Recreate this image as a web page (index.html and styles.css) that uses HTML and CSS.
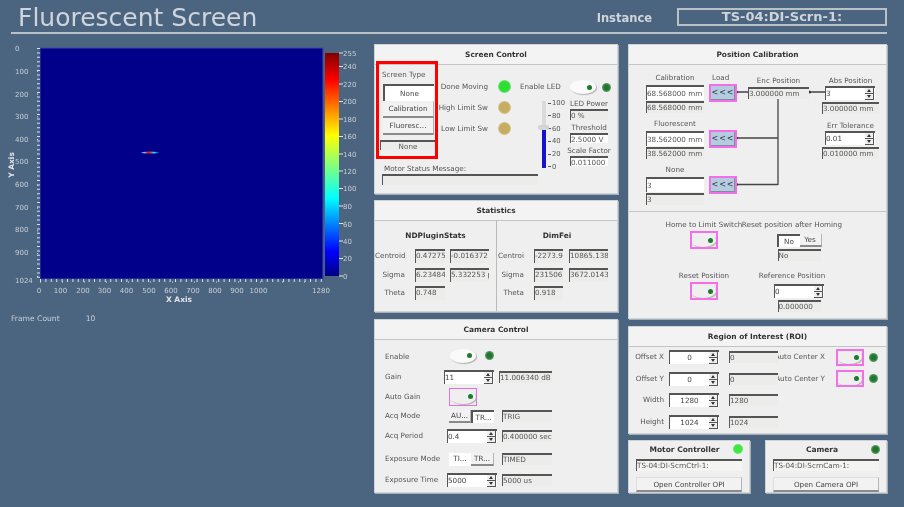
FILE: index.html
```html
<!DOCTYPE html>
<html lang="en">
<head>
    <meta charset="UTF-8">
    <meta name="viewport" content="width=device-width, initial-scale=1.0">
    <title>Fluorescent Screen</title>
    <link rel="stylesheet" href="styles.css">
</head>
<body>
    <div class="page">
        <header class="top">
            <h1>Fluorescent Screen</h1>
            <span class="instance-label">Instance</span>
            <span class="instance-value">TS-04:DI-Scrn-1:</span>
        </header>

        <main class="content">
            <section class="plot-col">
                <svg class="plot" viewBox="0 34 375 270" width="375" height="270">
                    <defs>
                        <linearGradient id="jet" x1="0" y1="1" x2="0" y2="0">
                            <stop offset="0" stop-color="#00007f"/>
                            <stop offset="0.11" stop-color="#0000ff"/>
                            <stop offset="0.35" stop-color="#00ffff"/>
                            <stop offset="0.63" stop-color="#ffff00"/>
                            <stop offset="0.88" stop-color="#ff0000"/>
                            <stop offset="1" stop-color="#7f0000"/>
                        </linearGradient>
                        <linearGradient id="spot" x1="0" y1="0" x2="1" y2="0">
                            <stop offset="0" stop-color="#00008b"/>
                            <stop offset="0.2" stop-color="#7fd0ff"/>
                            <stop offset="0.4" stop-color="#d01818"/>
                            <stop offset="0.55" stop-color="#e04040"/>
                            <stop offset="0.7" stop-color="#20f0ff"/>
                            <stop offset="1" stop-color="#00008b"/>
                        </linearGradient>
                    </defs>
                    <rect class="plot-image" x="40" y="48" width="283" height="231"/>
                    <ellipse cx="150" cy="152.6" rx="10" ry="1" fill="url(#spot)"/>

                    <line class="tick-minor" x1="38.5" y1="48" x2="38.5" y2="280"/>
                    <line class="tick-major" x1="37.5" y1="48" x2="37.5" y2="280"/>
                    <line class="tick-minor tick-x" x1="40" y1="280.5" x2="324" y2="280.5"/>
                    <line class="tick-major tick-x" x1="40" y1="282" x2="324" y2="282"/>

                    <g class="axis-text">
                        <text x="15" y="51">0</text>
                        <text x="15" y="74">100</text>
                        <text x="15" y="97">200</text>
                        <text x="15" y="119">300</text>
                        <text x="15" y="142">400</text>
                        <text x="15" y="164">500</text>
                        <text x="15" y="187">600</text>
                        <text x="15" y="210">700</text>
                        <text x="15" y="232">800</text>
                        <text x="15" y="255">900</text>
                        <text x="15" y="283">1024</text>
                    </g>
                    <g class="axis-text axis-text-x">
                        <text x="39" y="293">0</text>
                        <text x="60.5" y="293">100</text>
                        <text x="83" y="293">200</text>
                        <text x="104.5" y="293">300</text>
                        <text x="126.5" y="293">400</text>
                        <text x="149" y="293">500</text>
                        <text x="171" y="293">600</text>
                        <text x="193" y="293">700</text>
                        <text x="215" y="293">800</text>
                        <text x="237" y="293">900</text>
                        <text x="258.5" y="293">1000</text>
                        <text x="321" y="293">1280</text>
                    </g>
                    <text class="axis-title" x="179" y="302" text-anchor="middle">X Axis</text>
                    <text class="axis-title" transform="translate(13.5 165) rotate(-90)" text-anchor="middle">Y Axis</text>

                    <rect x="325" y="53" width="14" height="223" fill="url(#jet)"/>
                    <g class="bar-ticks">
                        <line x1="339" x2="343" y1="53" y2="53"/>
                        <line x1="339" x2="343" y1="66.5" y2="66.5"/>
                        <line x1="339" x2="343" y1="84" y2="84"/>
                        <line x1="339" x2="343" y1="101.5" y2="101.5"/>
                        <line x1="339" x2="343" y1="119" y2="119"/>
                        <line x1="339" x2="343" y1="136.5" y2="136.5"/>
                        <line x1="339" x2="343" y1="154" y2="154"/>
                        <line x1="339" x2="343" y1="171" y2="171"/>
                        <line x1="339" x2="343" y1="188.5" y2="188.5"/>
                        <line x1="339" x2="343" y1="206" y2="206"/>
                        <line x1="339" x2="343" y1="223.5" y2="223.5"/>
                        <line x1="339" x2="343" y1="241" y2="241"/>
                        <line x1="339" x2="343" y1="258.5" y2="258.5"/>
                        <line x1="339" x2="343" y1="276" y2="276"/>
                    </g>
                    <g class="axis-text">
                        <text x="343" y="55.5">255</text>
                        <text x="343" y="69">240</text>
                        <text x="343" y="87">220</text>
                        <text x="343" y="104">200</text>
                        <text x="343" y="121.5">180</text>
                        <text x="343" y="139">160</text>
                        <text x="343" y="156.5">140</text>
                        <text x="343" y="174">120</text>
                        <text x="343" y="191">100</text>
                        <text x="343" y="208.5">80</text>
                        <text x="343" y="226.5">60</text>
                        <text x="343" y="243.5">40</text>
                        <text x="343" y="261">20</text>
                        <text x="343" y="279">0</text>
                    </g>
                </svg>
                <div class="frame-count">
                    <span>Frame Count</span>
                    <span>10</span>
                </div>
            </section>

            <section class="panel-col">
                <div class="panel panel-screen">
                    <h2 class="panel-title">Screen Control</h2>
                    <div class="screen-body">
                        <div class="screen-type">
                            <span class="lbl">Screen Type</span>
                            <div class="type-buttons">
                                <span class="btn btn-on">None</span>
                                <span class="btn">Calibration</span>
                                <span class="btn">Fluoresc...</span>
                            </div>
                            <span class="box box-center">None</span>
                        </div>
                        <div class="status">
                            <div class="status-row"><span class="lbl">Done Moving</span><i class="led led-green"></i></div>
                            <div class="status-row"><span class="lbl">High Limit Sw</span><i class="led led-tan"></i></div>
                            <div class="status-row"><span class="lbl">Low Limit Sw</span><i class="led led-tan"></i></div>
                        </div>
                        <div class="enable-led">
                            <span class="lbl">Enable LED</span>
                            <span class="toggle"></span>
                            <i class="led led-small"></i>
                        </div>
                        <div class="slider">
                            <div class="slider-track"><span class="slider-handle"></span></div>
                            <div class="slider-scale">
                                <span>100</span><span>80</span><span>60</span><span>40</span><span>20</span><span>0</span>
                            </div>
                        </div>
                        <div class="led-fields">
                            <span class="lbl">LED Power</span>
                            <span class="box box-power">0 %</span>
                            <span class="lbl">Threshold</span>
                            <span class="box box-white">2.5000 V</span>
                            <span class="lbl">Scale Factor</span>
                            <span class="box box-white">0.011000</span>
                        </div>
                        <div class="motor-message">
                            <span class="lbl">Motor Status Message:</span>
                            <span class="box"></span>
                        </div>
                    </div>
                    <div class="highlight"></div>
                </div>

                <div class="panel panel-stats">
                    <h2 class="panel-title">Statistics</h2>
                    <div class="stats-body">
                        <div class="stats-side">
                            <h3>NDPluginStats</h3>
                            <div class="stats-grid">
                                <span class="lbl">Centroid</span>
                                <span class="box">0.472753</span>
                                <span class="box">-0.016372 px</span>
                                <span class="lbl">Sigma</span>
                                <span class="box">6.234842</span>
                                <span class="box">5.332253 px</span>
                                <span class="lbl">Theta</span>
                                <span class="box">0.748</span>
                            </div>
                        </div>
                        <div class="stats-side stats-side-right">
                            <h3>DimFei</h3>
                            <div class="stats-grid">
                                <span class="lbl">Centroid</span>
                                <span class="box">-2273.946</span>
                                <span class="box">10865.1382</span>
                                <span class="lbl">Sigma</span>
                                <span class="box">2315063</span>
                                <span class="box">3672.0143</span>
                                <span class="lbl">Theta</span>
                                <span class="box">0.918</span>
                            </div>
                        </div>
                    </div>
                </div>

                <div class="panel panel-camera">
                    <h2 class="panel-title">Camera Control</h2>
                    <div class="camera-body">
                        <span class="lbl">Enable</span>
                        <div class="camera-enable"><span class="toggle"></span><i class="led led-small"></i></div>
                        <span></span>

                        <span class="lbl">Gain</span>
                        <div class="spin spin-gain"><span class="spin-value">11</span><span class="spin-arrows"><i></i><i></i></span></div>
                        <span class="box box-gain">11.006340 dB</span>

                        <span class="lbl">Auto Gain</span>
                        <div class="marked"><span class="toggle"></span></div>
                        <span></span>

                        <span class="lbl">Acq Mode</span>
                        <div class="pair"><span class="btn">AU...</span><span class="btn btn-on">TR...</span></div>
                        <span class="box">TRIG</span>

                        <span class="lbl">Acq Period</span>
                        <div class="spin"><span class="spin-value">0.4</span><span class="spin-arrows"><i></i><i></i></span></div>
                        <span class="box">0.400000 sec:</span>

                        <span class="lbl">Exposure Mode</span>
                        <div class="pair"><span class="btn btn-white">TI...</span><span class="btn">TR...</span></div>
                        <span class="box">TIMED</span>

                        <span class="lbl">Exposure Time</span>
                        <div class="spin"><span class="spin-value">5000</span><span class="spin-arrows"><i></i><i></i></span></div>
                        <span class="box">5000 us</span>
                    </div>
                </div>
            </section>

            <section class="panel-col">
                <div class="panel panel-calib">
                    <h2 class="panel-title">Position Calibration</h2>
                    <div class="calib-upper">
                        <svg class="calib-lines" viewBox="629 65 257 147" width="257" height="147">
                            <path d="M736 92H748M809 92H825M778 98V185M736 138H778M736 184.500H778"/>
                            <circle cx="736.500" cy="92" r="1.500"/>
                            <circle cx="809.500" cy="92" r="1.500"/>
                            <circle cx="736.500" cy="138" r="1.500"/>
                            <circle cx="736.500" cy="184.500" r="1.500"/>
                        </svg>
                        <div class="calib-col calib-values">
                            <div class="calib-group">
                                <span class="lbl">Calibration</span>
                                <span class="box box-white box-tall">68.568000 mm</span>
                                <span class="box">68.568000 mm</span>
                            </div>
                            <div class="calib-group">
                                <span class="lbl">Fluorescent</span>
                                <span class="box box-white box-tall">38.562000 mm</span>
                                <span class="box">38.562000 mm</span>
                            </div>
                            <div class="calib-group">
                                <span class="lbl">None</span>
                                <span class="box box-white box-tall">3</span>
                                <span class="box">3</span>
                            </div>
                        </div>
                        <div class="calib-col calib-load">
                            <span class="lbl">Load</span>
                            <span class="load-btn">&lt;&lt;&lt;</span>
                            <span class="load-btn">&lt;&lt;&lt;</span>
                            <span class="load-btn">&lt;&lt;&lt;</span>
                        </div>
                        <div class="calib-col calib-enc">
                            <span class="lbl">Enc Position</span>
                            <span class="box">3.000000 mm</span>
                        </div>
                        <div class="calib-col calib-abs">
                            <span class="lbl">Abs Position</span>
                            <div class="spin"><span class="spin-value">3</span><span class="spin-arrows"><i></i><i></i></span></div>
                            <span class="box">3.000000 mm</span>
                            <span class="lbl lbl-err">Err Tolerance</span>
                            <div class="spin"><span class="spin-value">0.01</span><span class="spin-arrows"><i></i><i></i></span></div>
                            <span class="box">0.010000 mm</span>
                        </div>
                    </div>
                    <div class="calib-lower">
                        <div class="home-col">
                            <div class="home-group">
                                <span class="lbl">Home to Limit Switch</span>
                                <div class="marked"><span class="toggle"></span></div>
                            </div>
                            <div class="home-group">
                                <span class="lbl">Reset Position</span>
                                <div class="marked"><span class="toggle"></span></div>
                            </div>
                        </div>
                        <div class="home-col home-col-right">
                            <div class="home-group">
                                <span class="lbl">Reset position after Homing</span>
                                <div class="pair pair-yes"><span class="btn btn-on">No</span><span class="btn">Yes</span></div>
                                <span class="box">No</span>
                            </div>
                            <div class="home-group">
                                <span class="lbl">Reference Position</span>
                                <div class="spin"><span class="spin-value">0</span><span class="spin-arrows"><i></i><i></i></span></div>
                                <span class="box">0.000000</span>
                            </div>
                        </div>
                    </div>
                </div>

                <div class="panel panel-roi">
                    <h2 class="panel-title">Region of Interest (ROI)</h2>
                    <div class="roi-body">
                        <span class="lbl">Offset X</span>
                        <div class="spin spin-center"><span class="spin-value">0</span><span class="spin-arrows"><i></i><i></i></span></div>
                        <span class="box">0</span>
                        <span class="lbl lbl-clip"><span>Auto Center X</span></span>
                        <div class="marked"><span class="toggle"></span></div>
                        <i class="led led-small"></i>

                        <span class="lbl">Offset Y</span>
                        <div class="spin spin-center"><span class="spin-value">0</span><span class="spin-arrows"><i></i><i></i></span></div>
                        <span class="box">0</span>
                        <span class="lbl lbl-clip"><span>Auto Center Y</span></span>
                        <div class="marked"><span class="toggle"></span></div>
                        <i class="led led-small"></i>

                        <span class="lbl">Width</span>
                        <div class="spin spin-center"><span class="spin-value">1280</span><span class="spin-arrows"><i></i><i></i></span></div>
                        <span class="box">1280</span>
                        <span></span><span></span><span></span>

                        <span class="lbl">Height</span>
                        <div class="spin spin-center"><span class="spin-value">1024</span><span class="spin-arrows"><i></i><i></i></span></div>
                        <span class="box">1024</span>
                    </div>
                </div>

                <div class="links">
                    <div class="panel link-panel">
                        <div class="link-head"><h2>Motor Controller</h2><i class="led led-lime"></i></div>
                        <span class="box">TS-04:DI-ScrnCtrl-1:</span>
                        <span class="btn link-btn">Open Controller OPI</span>
                    </div>
                    <div class="panel link-panel">
                        <div class="link-head"><h2>Camera</h2><i class="led led-small"></i></div>
                        <span class="box">TS-04:DI-ScrnCam-1:</span>
                        <span class="btn link-btn">Open Camera OPI</span>
                    </div>
                </div>
            </section>
        </main>
    </div>
</body>
</html>
```

FILE: styles.css
```css
* {
    box-sizing: border-box;
    padding: 0;
    margin: 0;
}

:root {
    --bg-color: #4b6580;
    --panel: #efefef;
    --text: #555;
    --head: #cfd5da;
    --line: #555;
    --magenta: #f46ee8;
}

body {
    background-color: var(--bg-color);
    font-family: "DejaVu Sans", sans-serif;
    font-size: 7.200px;
    color: var(--text);
}

.page {
    width: 904px;
    height: 507px;
    overflow: hidden;
    filter: blur(.4px);
}

.top {
    height: 34px;
    margin: 0 17px 0 11px;
    padding: 0 0 0 7px;
    border-bottom: 2px solid #b9c0c6;
    display: flex;
    align-items: center;
    color: var(--head);
}

h1 {
    font-size: 25px;
    font-weight: normal;
    line-height: 1;
    flex: 1;
    margin-top: 2px;
}

.instance-label {
    font-size: 11.500px;
    font-weight: bold;
    margin-top: 4px;
}

.instance-value {
    width: 210px;
    height: 18px;
    margin: 2px 0 0 25px;
    border: 2px solid #b9c0c6;
    font-size: 13px;
    font-weight: bold;
    line-height: 14px;
    text-align: center;
}

.content {
    display: grid;
    grid-template-columns: 363px 244px 259px;
    column-gap: 10px;
    padding-top: 10px;
    padding-left: 1px;
}

.plot-col {
    margin: -10px 0 0 -1px;
}

.plot {
    display: block;
}

.plot-image {
    fill: #00008b;
    stroke: #3a4fa0;
    stroke-width: 1;
}

.tick-minor, .tick-major {
    stroke: #dde1e5;
    stroke-width: 1;
    stroke-dasharray: 1 3.400;
}

.tick-minor {
    stroke-width: 3;
}

.tick-major {
    stroke-dasharray: 1 21.800;
}

.tick-x {
    stroke-dasharray: 1 4.400;
}

.tick-major.tick-x {
    stroke-dasharray: 1 21;
}

.axis-text {
    font-size: 7px;
    fill: #c9cfd5;
}

.axis-text-x text {
    text-anchor: middle;
}

.axis-title {
    font-size: 7.500px;
    font-weight: bold;
    fill: #dfe3e7;
}

.bar-ticks line {
    stroke: #e2e5e8;
    stroke-width: 1;
}

.frame-count {
    display: flex;
    gap: 26px;
    padding: 10px 0 0 11px;
    font-size: 7.600px;
    color: #c9cfd5;
}

.panel-col {
    display: flex;
    flex-direction: column;
    gap: 6px;
}

.panel {
    position: relative;
    background-color: var(--panel);
    border: 1px solid #d0d3d6;
    box-shadow: 1px 1px 0 #a8b0b8;
}

.panel-title {
    height: 20px;
    border-bottom: 1px solid #c4c4c4;
    background-color: #f3f3f3;
    font-size: 7.400px;
    line-height: 20px;
    text-align: center;
    color: #333;
}

.panel-screen {
    height: 150px;
}

.panel-stats {
    height: 112px;
}

.panel-camera {
    height: 174px;
    margin-top: 1px;
}

.panel-calib {
    height: 275px;
}

.panel-roi {
    height: 108px;
    margin-top: 1px;
}

.lbl {
    white-space: nowrap;
    line-height: 10px;
}

.box {
    display: block;
    height: 12px;
    overflow: hidden;
    white-space: nowrap;
    border-top: 2px solid var(--line);
    border-left: 1px solid var(--line);
    background-color: #ececea;
    line-height: 10px;
    color: #555;
}

.box-white {
    background-color: #fff;
}

.box-tall {
    height: 15px;
    line-height: 13px;
}

.box-center {
    text-align: center;
}

.btn {
    display: block;
    overflow: hidden;
    white-space: nowrap;
    text-align: center;
    background-color: #f2f2f2;
    border-right: 1px solid #b4b4b4;
    border-bottom: 2px solid #8a8a8a;
    color: #444;
}

.btn-on {
    background-color: #fff;
    border: 0;
    border-top: 2px solid var(--line);
    border-left: 2px solid var(--line);
}

.btn-white {
    background-color: #fff;
    border: 0;
}

.led {
    display: block;
    flex: none;
    border-radius: 50%;
}

.led-green {
    width: 13px;
    height: 13px;
    background: radial-gradient(circle, #2be030 0 52%, #a6dca8 80%);
}

.led-tan {
    width: 13px;
    height: 13px;
    background: radial-gradient(circle, #c6ad62 0 52%, #d9d1a8 80%);
}

.led-small {
    width: 9px;
    height: 9px;
    background: radial-gradient(circle, #1c7a2c 0 38%, #8da893 85%);
}

.led-lime {
    width: 10px;
    height: 10px;
    background: radial-gradient(circle, #3fe83f 0 50%, #a8d8a8 85%);
}

.toggle {
    display: flex;
    justify-content: flex-end;
    align-items: center;
    width: 26px;
    height: 14px;
    flex: none;
    padding-right: 4px;
    border-radius: 50%;
    background-color: #fafafa;
    box-shadow: 1px 1px 1px #b0b0b0;
}

.toggle::after {
    content: "";
    width: 5px;
    height: 5px;
    border-radius: 50%;
    background-color: #1c7a2c;
}

.marked {
    display: flex;
    justify-content: flex-end;
    align-items: center;
    width: 28px;
    height: 18px;
    overflow: hidden;
    border: 2px solid var(--magenta);
}

.marked .toggle {
    padding-right: 3px;
    background-color: var(--panel);
}

.spin {
    display: flex;
    width: 50px;
    height: 14px;
    background-color: #fff;
    border-top: 2px solid var(--line);
    border-left: 1px solid var(--line);
}

.spin-value {
    flex: 1;
    line-height: 12px;
    color: #444;
}

.spin-center .spin-value {
    text-align: center;
}

.spin-arrows {
    display: flex;
    flex-direction: column;
    width: 9px;
    margin-right: 1px;
    border-right: 1px solid var(--line);
}

.spin-arrows i {
    flex: 1;
    display: flex;
    justify-content: center;
    align-items: center;
    background-color: var(--panel);
    border-bottom: 1px solid var(--line);
}

.spin-arrows i::before {
    content: "";
    border-left: 2.500px solid transparent;
    border-right: 2.500px solid transparent;
    border-bottom: 3px solid #333;
}

.spin-arrows i + i::before {
    border-bottom: 0;
    border-top: 3px solid #333;
}

.pair {
    display: flex;
    height: 13px;
    line-height: 11px;
}

.pair .btn {
    flex: 1;
}

/* screen control */
.screen-body {
    display: grid;
    grid-template-columns: 5px 58px 72px 28px 31px 1fr;
    grid-template-rows: 15px 21px 63px 27px;
}

.screen-type {
    grid-column: 2;
    grid-row: 1 / 4;
    display: flex;
    flex-direction: column;
    padding-top: 5px;
}

.screen-type .lbl {
    padding-left: 2px;
}

.type-buttons {
    display: flex;
    flex-direction: column;
    width: 51px;
    margin: 4px 0 5px 3px;
}

.type-buttons .btn {
    height: 17px;
    line-height: 15px;
}

.screen-type .box {
    width: 55px;
    height: 10px;
    line-height: 9px;
}

.status {
    grid-column: 3;
    grid-row: 2 / 4;
    display: flex;
    flex-direction: column;
    gap: 8px;
}

.status-row {
    display: flex;
    justify-content: flex-end;
    align-items: center;
    gap: 10px;
    height: 13px;
}

.status-row .led {
    margin-right: -1px;
}

.enable-led {
    grid-column: 4 / 7;
    grid-row: 2;
    display: flex;
    align-items: center;
    height: 14px;
    padding-left: 10px;
}

.enable-led .toggle {
    margin-left: 9px;
}

.enable-led .led {
    margin-left: 6px;
}

.slider {
    grid-column: 5;
    grid-row: 3 / 5;
    display: flex;
    gap: 2px;
    height: 72px;
}

.slider-track {
    position: relative;
    width: 4px;
    height: 67px;
    margin-left: 4px;
    background: linear-gradient(#dadada 0 44%, #1414d0 44%);
}

.slider-handle {
    position: absolute;
    top: 24px;
    left: -4px;
    width: 11px;
    height: 5px;
    border-radius: 2px;
    background-color: #d4d4d4;
}

.slider-scale {
    display: flex;
    flex-direction: column;
    justify-content: space-between;
    height: 72px;
    margin-top: -2px;
    font-size: 6.800px;
    line-height: 8px;
}

.slider-scale span {
    display: flex;
    align-items: center;
    gap: 1px;
}

.slider-scale span::before {
    content: "";
    width: 3px;
    height: 1px;
    background-color: #555;
}

.led-fields {
    grid-column: 6;
    grid-row: 3 / 5;
    display: flex;
    flex-direction: column;
    align-items: center;
    width: 38px;
    margin: -2px 0 0 1px;
}

.led-fields .box {
    width: 38px;
    height: 10px;
    margin-bottom: 3px;
    line-height: 9px;
}

.led-fields .box-power {
    height: 11px;
}

.motor-message {
    grid-column: 2 / 5;
    grid-row: 4;
    display: flex;
    flex-direction: column;
    padding-left: 2px;
}

.motor-message .lbl {
    padding-left: 2px;
}

.motor-message .box {
    height: 11px;
    width: 156px;
}

.highlight {
    position: absolute;
    left: 1px;
    top: 16px;
    width: 62px;
    height: 98px;
    border: 3px solid #f00;
}

/* statistics */
.stats-body {
    display: flex;
    height: 90px;
}

.stats-side {
    flex: none;
    width: 122px;
    border-right: 1px solid #bbb;
    padding-top: 10px;
}

.stats-side h3 {
    font-size: 7.400px;
    line-height: 10px;
    text-align: center;
    color: #333;
}

.stats-side-right {
    width: 120px;
    border-right: 0;
}

.stats-grid {
    display: grid;
    grid-template-columns: 31px 30px 39px;
    grid-auto-rows: 14px;
    column-gap: 5px;
    row-gap: 4.500px;
    align-items: center;
    margin: 8px 0 0 4px;
}

.stats-grid .lbl {
    overflow: hidden;
    text-align: right;
    margin: 0 5px 0 -4px;
}

.stats-grid .box {
    height: 14px;
}

.stats-side-right .stats-grid {
    margin-left: 0;
    grid-template-columns: 31px 29px 39px;
    column-gap: 6px;
}

.stats-side-right .lbl {
    margin: 0 0 0 1px;
    width: 26px;
}

/* camera control */
.camera-body {
    display: grid;
    grid-template-columns: 57px 50px 50px;
    grid-template-rows: 20px 20px 19px 20px 20px 26px 16px;
    column-gap: 5px;
    align-items: center;
    padding: 7px 0 0 10px;
}

.camera-enable {
    display: flex;
    align-items: center;
    gap: 9px;
    margin: -3px 0 0 3px;
}

.camera-body .marked {
    margin-left: 2px;
    border: 1px solid #e070e0;
}

.camera-body .pair {
    margin-left: 2px;
    width: 45px;
}

.spin-gain {
    margin-left: -3px;
}

.box-gain {
    margin-left: -3px;
    width: 53px;
}

/* position calibration */
.calib-upper {
    position: relative;
    display: flex;
    height: 147px;
    padding: 8px 0 0 17px;
    border-bottom: 1px solid #c4c4c4;
}

.calib-lines {
    position: absolute;
    left: 0;
    top: 0;
    fill: #333;
}

.calib-lines path {
    fill: none;
    stroke: #444;
    stroke-width: 1.300;
}

.calib-col {
    position: relative;
    display: flex;
    flex-direction: column;
}

.calib-values {
    width: 58px;
    gap: 6px;
}

.calib-group {
    display: flex;
    flex-direction: column;
}

.calib-group .lbl {
    margin-bottom: 2px;
    text-align: center;
}

.calib-group .box-tall {
    margin-bottom: 1px;
}

.calib-load {
    width: 28px;
    margin-left: 5px;
    gap: 28px;
}

.calib-load .lbl {
    margin: 0 0 -27px 3px;
}

.load-btn {
    display: block;
    height: 18px;
    border: 2px solid var(--magenta);
    box-shadow: inset -1px -1px 0 #7d8d9c;
    background-color: #b4cce0;
    font-size: 8px;
    line-height: 14px;
    letter-spacing: 1px;
    text-align: center;
    color: #334;
}

.calib-enc {
    width: 61px;
    margin-left: 11px;
    padding-top: 3px;
}

.calib-enc .lbl {
    text-align: center;
    margin-bottom: 1px;
}

.calib-abs {
    width: 57px;
    margin-left: 13px;
    padding-top: 3px;
}

.calib-abs .lbl {
    text-align: center;
}

.calib-abs .spin {
    margin: 0 0 2px 3px;
}

.calib-abs .lbl-err {
    margin-top: 7px;
}

.calib-lower {
    display: flex;
    padding: 8px 0 0 34px;
}

.home-col {
    display: flex;
    flex-direction: column;
    width: 82px;
    gap: 1px;
}

.home-col-right {
    width: 94px;
}

.home-group {
    display: flex;
    flex-direction: column;
    align-items: center;
    height: 50px;
}

.home-group .marked {
    height: 18px;
    margin-top: 1px;
}

.home-col-right .home-group .box {
    width: 43px;
    margin: 2px 0 0 14px;
}

.home-col-right .spin {
    margin: 3px 0 0 14px;
}

.pair-yes {
    width: 45px;
    margin: 4px 0 0 14px;
}

/* roi */
.roi-body {
    display: grid;
    grid-template-columns: 35px 50px 50px 46px 34px 10px;
    grid-auto-rows: 14px;
    column-gap: 5px;
    row-gap: 7.500px;
    align-items: center;
    padding-top: 3px;
}

.roi-body .box {
    margin-left: 5px;
    width: 49px;
}

.roi-body > .lbl:not(.lbl-clip) {
    text-align: right;
}

.lbl-clip {
    display: flex;
    justify-content: flex-end;
    overflow: hidden;
    margin-left: -1px;
}

.roi-body .marked {
    justify-self: end;
    width: 28px;
    height: 17px;
}

/* link panels */
.links {
    display: flex;
    justify-content: space-between;
}

.link-panel {
    display: flex;
    flex-direction: column;
    width: 122px;
    height: 53px;
    padding: 3px 7px 0;
}

.link-head {
    display: flex;
    justify-content: center;
    align-items: center;
    height: 10px;
    margin-bottom: 5px;
}

.link-head h2 {
    font-size: 7.500px;
    color: #333;
    flex: 1;
    text-align: center;
}

.link-head .led {
    margin-right: -1px;
}

.link-panel .box {
    background-color: #f4f4f0;
}

.link-btn {
    height: 15px;
    margin-top: 6px;
    line-height: 14px;
    border-left: 1px solid #ddd;
    border-top: 1px solid #ddd;
}
```
